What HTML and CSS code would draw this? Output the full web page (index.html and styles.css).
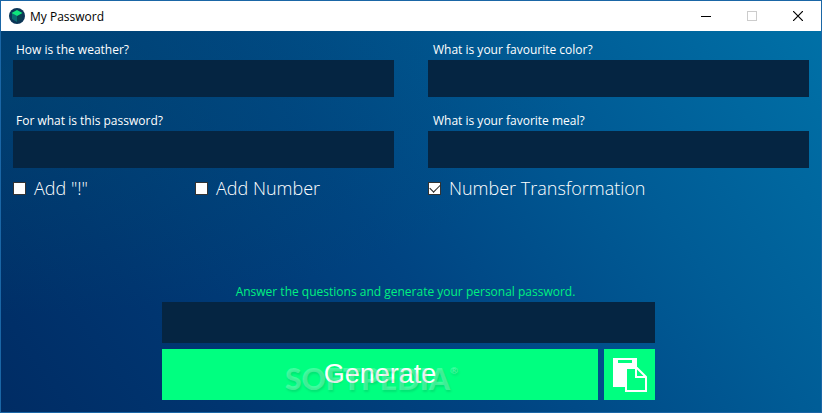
FILE: index.html
```html
<!DOCTYPE html>
<html lang="en">
<head>
  <meta charset="UTF-8">
  <meta name="viewport" content="width=device-width, initial-scale=1.0">
  <title>My Password</title>
  <link rel="stylesheet" href="styles.css">
</head>
<body>
<div class="window">
  <header class="titlebar">
    <svg class="app-icon" viewBox="0 0 16 16" aria-hidden="true">
      <circle cx="8" cy="8" r="8" fill="#0b3556"/>
      <path d="M3 5 8 8v6l-5-3z" fill="#0a6a70"/>
      <path d="M13 5 8 8v6l5-3z" fill="#08404f"/>
      <path d="M8 2 13.5 5 8 8 2.5 5z" fill="#0fe67c"/>
    </svg>
    <h1 class="title">My Password</h1>
    <div class="window-controls">
      <button class="window-button" type="button" aria-label="Minimize">
        <svg width="10" height="10" shape-rendering="crispEdges"><path d="M0 5h10v1H0z" fill="#000"/></svg>
      </button>
      <button class="window-button" type="button" aria-label="Maximize" disabled>
        <svg width="10" height="10" shape-rendering="crispEdges"><path d="M0 0h10v10H0zM1 1v8h8V1z" fill="#ccc" fill-rule="evenodd"/></svg>
      </button>
      <button class="window-button" type="button" aria-label="Close">
        <svg width="10" height="10"><path d="M0 0l10 10M10 0L0 10" stroke="#000" stroke-width="1.2"/></svg>
      </button>
    </div>
  </header>

  <main class="content">
    <form class="questions">
      <div class="field">
        <label class="field-label" for="weather">How is the weather?</label>
        <input class="text-box" type="text" id="weather">
      </div>
      <div class="field">
        <label class="field-label" for="color">What is your favourite color?</label>
        <input class="text-box" type="text" id="color">
      </div>
      <div class="field">
        <label class="field-label" for="purpose">For what is this password?</label>
        <input class="text-box" type="text" id="purpose">
      </div>
      <div class="field">
        <label class="field-label" for="meal">What is your favorite meal?</label>
        <input class="text-box" type="text" id="meal">
      </div>
    </form>

    <div class="options">
      <div class="option-pair">
        <label class="option"><input class="tick" type="checkbox">Add "!"</label>
        <label class="option"><input class="tick" type="checkbox">Add Number</label>
      </div>
      <label class="option"><input class="tick" type="checkbox" checked>Number Transformation</label>
    </div>

    <div class="result">
      <label class="hint" for="password">Answer the questions and generate your personal password.</label>
      <input class="text-box output" type="text" id="password" readonly>
      <div class="actions">
        <button class="action generate" type="button">
          Generate
          <span class="watermark" aria-hidden="true">SOFTPEDIA<sup class="mark">®</sup></span>
        </button>
        <button class="action copy" type="button" aria-label="Copy password">
          <svg width="34" height="34" viewBox="0 0 34 34">
            <path d="M0 0h24v9H12v20H0z" fill="#fff"/>
            <path d="M5 2h14v3H5z" fill="#00ff80"/>
            <path d="M13 10h11l9 9v14H13z" fill="#00ff80" stroke="#fff" stroke-width="2"/>
            <path d="M23 9v10h10" fill="none" stroke="#fff" stroke-width="2"/>
          </svg>
        </button>
      </div>
    </div>
  </main>
</div>
</body>
</html>
```

FILE: styles.css
```css
* {
  box-sizing: border-box;
}
body {
  margin: 0;
  font-family: "Open Sans", "Noto Sans", sans-serif;
  font-size: 12px;
  color: #fff;
}
.window {
  display: flex;
  flex-direction: column;
  min-height: 100vh;
  border: 1px solid #1a66a6;
  background:
    radial-gradient(ellipse at 0% 20%, rgba(0, 84, 112, 0.35), rgba(0, 84, 112, 0) 50%),
    linear-gradient(54deg, #002c64 0%, #003570 20%, #004482 45%, #005c96 72%, #0072a8 100%);
}

/* title bar */
.titlebar {
  display: flex;
  align-items: center;
  height: 30px;
  padding-left: 8px;
  background: #fff;
  color: #000;
}
.app-icon {
  width: 16px;
  height: 16px;
  margin-right: 5px;
}
.title {
  margin: 0;
  font-size: 12px;
  font-weight: normal;
}
.window-controls {
  display: flex;
  margin-left: auto;
}
.window-button {
  display: flex;
  align-items: center;
  justify-content: center;
  width: 46px;
  height: 30px;
  padding: 0;
  border: 0;
  background: none;
}

/* questions */
.content {
  display: flex;
  flex: 1;
  flex-direction: column;
  padding: 8px 12px 12px;
}
.questions {
  display: grid;
  grid-template-columns: 1fr 1fr;
  gap: 13px 34px;
}
.field {
  display: flex;
  flex-direction: column;
}
.field-label {
  padding-left: 3px;
  line-height: 21px;
}
.field:nth-child(even) .field-label {
  padding-left: 5px;
}
.text-box {
  width: 100%;
  height: 37px;
  padding: 0 8px;
  border: 0;
  background: #052542;
  color: #fff;
  font: inherit;
  font-size: 18px;
}

/* options */
.options {
  display: grid;
  grid-template-columns: 1fr 1fr;
  gap: 34px;
  margin-top: 8px;
}
.option-pair {
  display: grid;
  grid-template-columns: 182px 1fr;
}
.option {
  display: flex;
  align-items: center;
  gap: 8px;
  font-size: 18px;
  font-weight: 300;
  line-height: 24px;
}
.tick {
  appearance: none;
  width: 13px;
  height: 13px;
  margin: 0;
  border: 1px solid #333;
  background: #fff;
}
.tick:checked::before {
  content: "";
  display: block;
  width: 9px;
  height: 5px;
  margin: 2px 1px;
  border: solid #222;
  border-width: 0 0 1px 1px;
  transform: translateY(-1px) rotate(-45deg);
}

/* result */
.result {
  display: flex;
  flex-direction: column;
  width: 498px;
  max-width: 100%;
  margin: auto auto 0;
  padding-right: 5px;
}
.hint {
  padding-right: 6px;
  color: #00f080;
  line-height: 21px;
  text-align: center;
}
.output {
  height: 41px;
}
.actions {
  display: flex;
  gap: 6px;
  margin-top: 6px;
}
.action {
  display: flex;
  align-items: center;
  justify-content: center;
  height: 51px;
  padding: 0;
  border: 0;
  background: #00ff80;
  color: #fff;
}
.generate {
  position: relative;
  flex: 1;
  font-family: "Liberation Sans", Arial, sans-serif;
  font-size: 27px;
}
.copy {
  width: 51px;
}
.watermark {
  position: absolute;
  top: 9px;
  left: 123px;
  color: rgba(255, 255, 255, 0.25);
  font-family: Lato, sans-serif;
  font-size: 30px;
  font-weight: 900;
  line-height: 40px;
  text-shadow: 1px 2px 2px rgba(0, 90, 50, 0.15);
}
.mark {
  font-size: 10px;
  line-height: 24px;
  vertical-align: top;
}
```
